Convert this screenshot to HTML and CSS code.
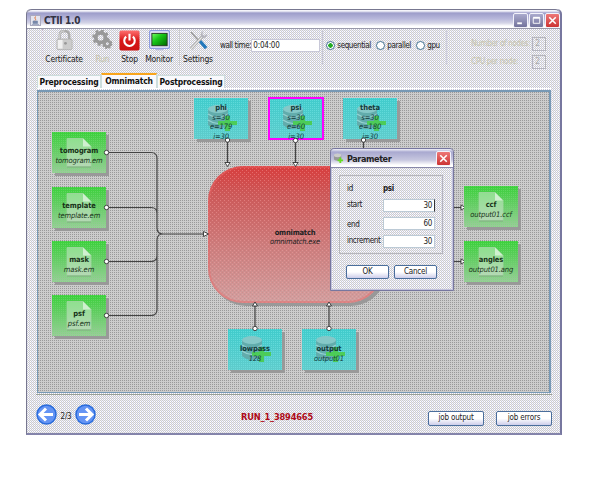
FILE: index.html
```html
<!DOCTYPE html>
<html lang="en">
<head>
<meta charset="utf-8">
<title>CTII 1.0</title>
<link rel="stylesheet" href="styles.css">
</head>
<body>
<svg width="0" height="0" class="defs">
  <defs>
    <linearGradient id="pageg" x2="0" y2="1"><stop stop-color="#8fe08f"/><stop offset="1" stop-color="#b4d8b4"/></linearGradient>
    <symbol id="doc" viewBox="0 0 26 30"><path d="M1 1h16l8 8v20H1z" fill="url(#pageg)" stroke="#a4d4a4" stroke-width=".8"/><path d="M17 1v8h8z" fill="#d0f0d0"/><path d="M1 29.500h24" stroke="#7fae7f"/></symbol>
    <symbol id="db" viewBox="0 0 30 28"><path d="M1 5v16q9 8 20 0V5z" fill="#62acac"/><ellipse cx="11" cy="5" rx="10" ry="4" fill="#86c8c8"/><path d="M1 10q10 7 20 0M1 16q10 7 20 0" fill="none" stroke="#96d2d2" stroke-width="1.2"/><path d="M18 12h5v5h7v4h-7v6h-5v-6h-7v-4h7z" fill="#4ccc58"/></symbol>
  </defs>
</svg>
<main class="window">
  <header class="titlebar">
    <svg class="java" viewBox="0 0 11 11"><rect x=".5" y=".5" width="10" height="10" fill="#e4e4ee" stroke="#aaaabf"/><path d="M6 1.5c-3 2 1 2-1 4" stroke="#e07030" fill="none"/><path d="M3 6h4.5v2.5H3zM2 9.5h7" fill="#7788aa" stroke="#7788aa" stroke-width=".6"/></svg>
    <h1>CTII 1.0</h1>
    <span class="wbtn"><svg viewBox="0 0 13 14"><path d="M3 9h5v2H3z" fill="#fff"/></svg></span>
    <span class="wbtn"><svg viewBox="0 0 13 14"><path d="M3 4h7v6H3z" fill="none" stroke="#fff"/><path d="M3 4h7" stroke="#fff" stroke-width="2"/></svg></span>
    <span class="wbtn close"><svg viewBox="0 0 13 14"><path d="M3 3.500l7 7m0-7l-7 7" stroke="#fff" stroke-width="1.700"/></svg></span>
  </header>
  <section class="toolbar">
    <div class="tool t1"><svg viewBox="0 0 22 22"><path d="M6 10V6q0-5 5-5t5 5v4" fill="none" stroke="#aaa" stroke-width="2.500"/><path d="M6 10V6q0-5 5-5" fill="none" stroke="#ddd"/><rect x="3" y="9.500" width="16" height="11" rx="1" fill="#ccc" stroke="#aaa" stroke-width=".7"/><path d="M4 10.500h5v9H4z" fill="#f0f0f0"/><circle cx="12" cy="14" r="1.500" fill="#999"/></svg><span>Certificate</span></div>
    <div class="tool t2 off"><svg viewBox="0 0 22 22"><circle cx="9" cy="8" r="5" fill="none" stroke="#999" stroke-width="4"/><circle cx="9" cy="8" r="7.500" fill="none" stroke="#999" stroke-width="2.500" stroke-dasharray="3 2.900"/><circle cx="16" cy="14.500" r="3" fill="none" stroke="#999" stroke-width="2.800"/><circle cx="16" cy="14.500" r="4.500" fill="none" stroke="#999" stroke-width="1.800" stroke-dasharray="2 1.530"/></svg><span>Run</span></div>
    <div class="tool t3"><svg viewBox="0 0 22 22"><defs><linearGradient id="rg" x2="0" y2="1"><stop stop-color="#ff7070"/><stop offset=".5" stop-color="#d81818"/><stop offset="1" stop-color="#cc1111"/></linearGradient></defs><rect x=".5" y=".5" width="21" height="21" rx="2" fill="url(#rg)"/><path d="M7.500 7a5.500 5.500 0 1 0 7 0M11 4v7" fill="none" stroke="#fff" stroke-width="2.200"/></svg><span>Stop</span></div>
    <div class="tool t4"><svg viewBox="0 0 22 22"><defs><linearGradient id="mg" x2="1" y2="1"><stop stop-color="#77ff66"/><stop offset=".4" stop-color="#19c819"/><stop offset="1" stop-color="#006600"/></linearGradient></defs><rect x=".6" y=".7" width="20.800" height="18.500" rx="1.500" fill="#eef" stroke="#8e9ce0" stroke-width="1.400"/><rect x="3" y="3.500" width="16" height="13" fill="url(#mg)" stroke="#223322"/><path d="M7 20.500h8" stroke="#b8b8e0" stroke-width="1.500"/></svg><span>Monitor</span></div>
    <div class="tool t5"><svg viewBox="0 0 22 22"><path d="M3 2l9 10" stroke="#999" stroke-width="1.500"/><path d="M12 11l7 8" stroke="#2277bb" stroke-width="3.500"/><path d="M3 20L15 7" stroke="#aaa" stroke-width="3"/><path d="M3 20L15 7" stroke="#eee" stroke-width="1.200"/><path d="M16 1c-4 2-3 6-1 7s5 0 5-4l-3 2-2-1z" fill="#b5b5bd"/></svg><span>Settings</span></div>
    <label class="wall">wall time: <span class="field">0:04:00</span></label>
    <div class="radios">
      <span class="opt o1"><i class="radio on"></i>sequential</span>
      <span class="opt o2"><i class="radio"></i>parallel</span>
      <span class="opt o3"><i class="radio"></i>gpu</span>
    </div>
    <div class="counts">
      <span>Number of nodes:</span><b>2</b>
      <span>CPU per node:</span><b>2</b>
    </div>
  </section>
  <nav class="tabs"><span class="tab a">Preprocessing</span><span class="tab b">Omnimatch</span><span class="tab c">Postprocessing</span></nav>
  <section class="canvas">
    <svg class="edges" viewBox="37 91 514 301">
      <defs>
        <linearGradient id="red" x2="0" y2="1"><stop stop-color="#d83c3c"/><stop offset=".2" stop-color="#cc5858"/><stop offset=".6" stop-color="#cc7f7f"/><stop offset="1" stop-color="#d0a0a0"/></linearGradient>
        <pattern id="dither" width="4" height="4" patternUnits="userSpaceOnUse"><path d="M0 0h1v1H0zM2 2h1v1H2z" fill="#ffaaaa"/><path d="M2 0h1v1H2zM0 2h1v1H0z" fill="#cc5555" opacity=".45"/></pattern>
      </defs>
      <rect x="211" y="169" width="175" height="137" rx="35" fill="#999"/>
      <rect x="208" y="166" width="175" height="137" rx="35" fill="url(#red)"/>
      <rect x="208" y="166" width="175" height="137" rx="35" fill="url(#dither)" opacity=".4"/>
      <rect x="209" y="167" width="173" height="135" rx="34" fill="none" stroke="#e86666" stroke-width="2" opacity=".45"/>
      <g fill="none" stroke="#444" stroke-width="1.200">
        <path d="M108 152.500h43q6 0 6 6V228q0 6 6 6h41M108 207.500h43q6 0 6 6M108 261.500h43q6 0 6-6M108 315.500h43q6 0 6-6V240q0-6 6-6"/>
        <path d="M227.500 140v24M295.500 140v24M363.500 140v24M255 305v22M329 305v22M383 207.500h79M383 261.500h79"/>
      </g>
      <g fill="#fff" stroke="#222" stroke-width=".8">
        <path d="M203.500 231.500l5 2.500-5 2.500zM461 205l4.500 2.500-4.500 2.500zM461 259l4.500 2.500-4.500 2.500zM225 162.500h5l-2.500 4zM293 162.500h5l-2.500 4zM252.500 306h5l-2.500-4zM326.500 306h5l-2.500-4z"/>
      </g>
    </svg>
    <div class="label main"><b>omnimatch</b><i>omnimatch.exe</i></div>
    <div class="node teal n-phi"><svg><use href="#db"/></svg><b>phi</b><i>s=30</i><i>e=179</i><i>i=30</i></div>
    <div class="node teal sel n-psi"><svg><use href="#db"/></svg><b>psi</b><i>s=30</i><i>e=60</i><i>i=30</i></div>
    <div class="node teal n-theta"><svg><use href="#db"/></svg><b>theta</b><i>s=30</i><i>e=180</i><i>i=30</i></div>
    <div class="node green n-tomo"><svg><use href="#doc"/></svg><b>tomogram</b><i>tomogram.em</i></div>
    <div class="node green n-temp"><svg><use href="#doc"/></svg><b>template</b><i>template.em</i></div>
    <div class="node green n-mask"><svg><use href="#doc"/></svg><b>mask</b><i>mask.em</i></div>
    <div class="node green n-psf"><svg><use href="#doc"/></svg><b>psf</b><i>psf.em</i></div>
    <div class="node green n-ccf"><svg><use href="#doc"/></svg><b>ccf</b><i>output01.ccf</i></div>
    <div class="node green n-ang"><svg><use href="#doc"/></svg><b>angles</b><i>output01.ang</i></div>
    <div class="node teal low n-low"><svg><use href="#db"/></svg><b>lowpass</b><i>128</i></div>
    <div class="node teal low n-out"><svg><use href="#db"/></svg><b>output</b><i>output01</i></div>
    <svg class="edges" viewBox="37 91 514 301">
      <g fill="#fff" stroke="#222" stroke-width=".8"><circle cx="106.500" cy="152.500" r="2.200"/><circle cx="106.500" cy="207.500" r="2.200"/><circle cx="106.500" cy="261.500" r="2.200"/><circle cx="106.500" cy="315.500" r="2.200"/><circle cx="227.500" cy="140" r="2.200"/><circle cx="295.500" cy="140.500" r="2.200"/><circle cx="363.500" cy="140" r="2.200"/><circle cx="255" cy="328.500" r="2.200"/><circle cx="329" cy="328.500" r="2.200"/></g>
    </svg>
    <div class="dialog">
      <div class="dtitle"><svg viewBox="0 0 12 12"><path d="M1 2v5q4 3 8 0V2z" fill="#999"/><ellipse cx="5" cy="2.500" rx="4" ry="2" fill="#ccc"/><path d="M8 5v6M5 8h6" stroke="#66dd22" stroke-width="2"/></svg><strong>Parameter</strong><span class="wbtn close"><svg viewBox="0 0 13 14"><path d="M3 3.500l7 7m0-7l-7 7" stroke="#fff" stroke-width="1.700"/></svg></span></div>
      <div class="form">
        <span>id</span><strong>psi</strong>
        <span>start</span><span class="num caret">30</span>
        <span class="down">end</span><span class="num">60</span>
        <span>increment</span><span class="num">30</span>
      </div>
      <div class="actions"><span class="btn">OK</span><span class="btn">Cancel</span></div>
    </div>
  </section>
  <footer class="footer">
    <svg class="arrow" viewBox="0 0 21 21"><circle cx="10.500" cy="10.500" r="9.500" fill="#6494f4" stroke="#286bdc" stroke-width="1.500"/><path d="M17 10.500H5M10 4.500l-6 6 6 6" fill="none" stroke="#fff" stroke-width="3"/></svg>
    <span class="pos">2/3</span>
    <svg class="arrow" viewBox="0 0 21 21"><circle cx="10.500" cy="10.500" r="9.500" fill="#6494f4" stroke="#286bdc" stroke-width="1.500"/><path d="M4 10.500h12M11 4.500l6 6-6 6" fill="none" stroke="#fff" stroke-width="3"/></svg>
    <strong class="run">RUN_1_3894665</strong>
    <span class="btn wide">job output</span><span class="btn wide">job errors</span>
  </footer>
</main>
</body>
</html>
```
FILE: styles.css
```css
* { box-sizing: border-box; }
body { margin: 0; background: #fff; color: #222; font: 8px/10px "DejaVu Sans Condensed", "DejaVu Sans", sans-serif; font-stretch: condensed; letter-spacing: -0.2px; }
svg { display: block; }
.defs { position: absolute; }
.window {
  width: 536px; height: 426px; margin: 9px 0 0 26px; display: flex; flex-direction: column;
  border: 1px solid #77778f; border-top: 0; border-right: 2px solid #77779f; border-bottom: 2px solid #8484aa; border-radius: 5px 5px 0 0;
  background: conic-gradient(#fff 25%, #ccc 0 50%, #ededf5 0 75%, #c8c8d8 0) 0 0 / 2px 2px;
}
.titlebar { height: 20px; flex: none; display: flex; align-items: center; gap: 1px; padding: 3px 0 0 3px; border-bottom: 1px solid #99a; border-top: 1px solid #777790; border-radius: 5px 5px 0 0; background: linear-gradient(#f4f4fa 0, #f4f4fa 1px, #9d9dca 3px, #b9b9dc 9px, #d4d4e6 13px, #fff 16px); }
.titlebar h1 { flex: 1; margin: 0 0 0 2px; font: bold 10px/14px "DejaVu Sans Condensed", "DejaVu Sans", sans-serif; font-stretch: condensed; letter-spacing: -0.3px; color: #334; }
.java { width: 11px; height: 11px; }
.wbtn { width: 15px; height: 15px; border: 1px solid #f2f2fa; border-radius: 2px; background: linear-gradient(#aaaacd, #73739c); }
.wbtn svg { width: 13px; height: 13px; }
.wbtn.close { background: linear-gradient(#e77, #cc3333); }
.toolbar { height: 45px; flex: none; display: flex; align-items: flex-start; padding-left: 15px; }
.tool { display: flex; flex-direction: column; align-items: center; padding-top: 1px; }
.tool svg { width: 21px; height: 21px; }
.tool span { font-size: 8.5px; line-height: 11px; margin-top: 3px; white-space: nowrap; }
.t1 { width: 43px; border-left: 1px dotted #c8b8c8; }
.t2 { width: 35px; }
.t3 { width: 19px; }
.t4 { width: 40px; }
.t5 { width: 37px; border-left: 1px dotted #ccc; }
.off { color: #c5c2a8; }
.wall { margin-left: 4px; display: flex; align-items: center; height: 15px; margin-top: 9px; letter-spacing: -.4px; }
.field { width: 69px; height: 13px; line-height: 12px; padding-left: 1px; background: #fff; border: 1px solid #c8c8d8; letter-spacing: -.2px; }
.radios { display: flex; width: 125px; height: 33px; margin: 2px 0 0 2px; padding: 9px 0 0 3px; border-left: 1px dotted #c5c5d5; border-right: 1px solid #cfcfdc; letter-spacing: -.4px; }
.opt { display: flex; flex: none; align-items: center; gap: 2px; height: 11px; white-space: nowrap; }
.o1 { width: 50px; } .o2 { width: 40px; }
.radio { width: 9px; height: 9px; flex: none; border: 1px solid #407090; border-radius: 50%; background: #fff; }
.radio.on { background: radial-gradient(circle, #2a2 0 2px, #fff 2.500px); }
.counts { display: grid; grid-template-columns: 61px 14px; grid-auto-rows: 14px; row-gap: 4px; margin: 8px 0 0 24px; color: #c6c4ad; align-items: center; white-space: nowrap; letter-spacing: -.35px; }
.counts b { height: 14px; border: 1px solid #b5b5be; padding-left: 2px; line-height: 12px; font-weight: normal; color: #aaa; }
.tabs { height: 15px; flex: none; display: flex; align-items: flex-end; margin: 0 9px 0 10px; border-bottom: 1px solid #fff; font-weight: bold; color: #111; }
.tab { height: 13px; background: #f9f9fc; border: 1px solid #cdd; border-bottom: 0; text-align: center; line-height: 13px; white-space: nowrap; font-size: 8.500px; }
.tab.a { width: 64px; }
.tab.b { width: 56px; height: 15px; border-top: 2px solid #f9a51b; line-height: 12px; }
.tab.c { width: 68px; }
.canvas { position: relative; width: 514px; height: 303px; flex: none; margin: 1px 0 0 10px; border: 1px solid #7799b5; border-top-width: 2px; border-right-width: 2px; background: conic-gradient(#999 25%, #ccc 0) 0 0 / 2px 2px; background-origin: border-box; }
.edges { position: absolute; left: -1px; top: -1px; width: 514px; height: 301px; }
.label { position: absolute; left: 219px; top: 136px; width: 76px; display: flex; flex-direction: column; align-items: center; line-height: 9px; font-size: 7.500px; }
.node { position: absolute; width: 54px; height: 41px; padding-top: 6px; display: flex; flex-direction: column; align-items: center; justify-content: center; font-size: 7.500px; line-height: 9.500px; color: #173117; box-shadow: 3px 3px 0 #999; letter-spacing: -.1px; white-space: nowrap; }
.node b, .node i { z-index: 1; }
.node svg { position: absolute; width: 26px; height: 31px; left: 14px; top: 5px; }
.green { background: conic-gradient(rgba(120,220,120,.5) 25%, transparent 0) 0 0 / 2px 2px, linear-gradient(#3bd13b, #60cc60 40%, #9acc9a); }
.teal { background: conic-gradient(rgba(120,230,230,.5) 25%, transparent 0) 0 0 / 2px 2px, linear-gradient(#40cccc, #60cccc); color: #123b3b; justify-content: flex-start; padding-top: 5px; line-height: 9.600px; }
.teal svg { width: 30px; height: 28px; left: 13px; top: 6px; }
.teal.low { padding-top: 15px; }
.sel { outline: 2px solid #ff00ff; outline-offset: -1px; box-shadow: none; }
.n-phi { left: 156px; top: 6px; } .n-psi { left: 231px; top: 6px; } .n-theta { left: 305px; top: 6px; }
.n-tomo { left: 14px; top: 40px; } .n-temp { left: 14px; top: 95px; } .n-mask { left: 14px; top: 149px; } .n-psf { left: 14px; top: 203px; }
.n-ccf { left: 426px; top: 94px; } .n-ang { left: 426px; top: 149px; }
.n-low { left: 190px; top: 237px; } .n-out { left: 264px; top: 237px; }
.dialog { position: absolute; left: 292px; top: 56px; width: 124px; height: 143px; border: 1px solid #77779f; border-radius: 4px 4px 0 0; box-shadow: inset 0 0 0 1px #c2c2dc; background: conic-gradient(#fff 25%, #ccc 0 50%, #ededf5 0 75%, #c8c8d8 0) 0 0 / 2px 2px; z-index: 3; }
.dtitle { display: flex; align-items: center; height: 19px; padding: 1px 2px 0 2px; border-bottom: 1px solid #8888aa; border-radius: 4px 4px 0 0; background: linear-gradient(#f2f2f9, #a9a9d0 3px, #c7c7df 11px, #fff 16px); }
.dtitle > svg { width: 11px; height: 11px; }
.dtitle strong { flex: 1; margin-left: 3px; font-size: 9px; letter-spacing: -.4px; }
.form { width: 104px; height: 79px; margin: 7px 0 0 8px; padding: 5px 7px; border: 1px solid #b5b5bd; display: grid; grid-template-columns: 36px 52px; grid-template-rows: 15px 18px 18px 18px; align-items: center; letter-spacing: -.35px; }
.form strong, .form > span { white-space: nowrap; }
.form .down { padding-top: 3px; }
.form .num { height: 13px; line-height: 11px; padding-right: 2px; background: #fff; border: 1px solid #bccad6; text-align: right; }
.form .caret { border-right: 1px solid #333; }
.actions { display: flex; gap: 5px; margin: 11px 0 0 15px; }
.btn { width: 43px; height: 14px; line-height: 12px; text-align: center; background: linear-gradient(#fff 50%, #cdcdea); border: 1px solid #4a6e9c; border-radius: 2px; white-space: nowrap; }
.footer { flex: 1; display: flex; align-items: flex-start; margin: 1px 8px 0 9px; padding-top: 9px; border-top: 1px solid #99a095; }
.arrow { width: 21px; height: 21px; flex: none; }
.pos { width: 18px; flex: none; margin-top: 8px; text-align: center; }
.run { width: 73px; margin: 8px auto 0 145px; font: bold 8.300px/10px "DejaVu Sans", sans-serif; letter-spacing: -.2px; color: #ae0b18; }
.wide { width: 56px; margin: 7px 12px 0 0; height: 15px; flex: none; }
.wide:last-child { margin-right: 0; }
```
